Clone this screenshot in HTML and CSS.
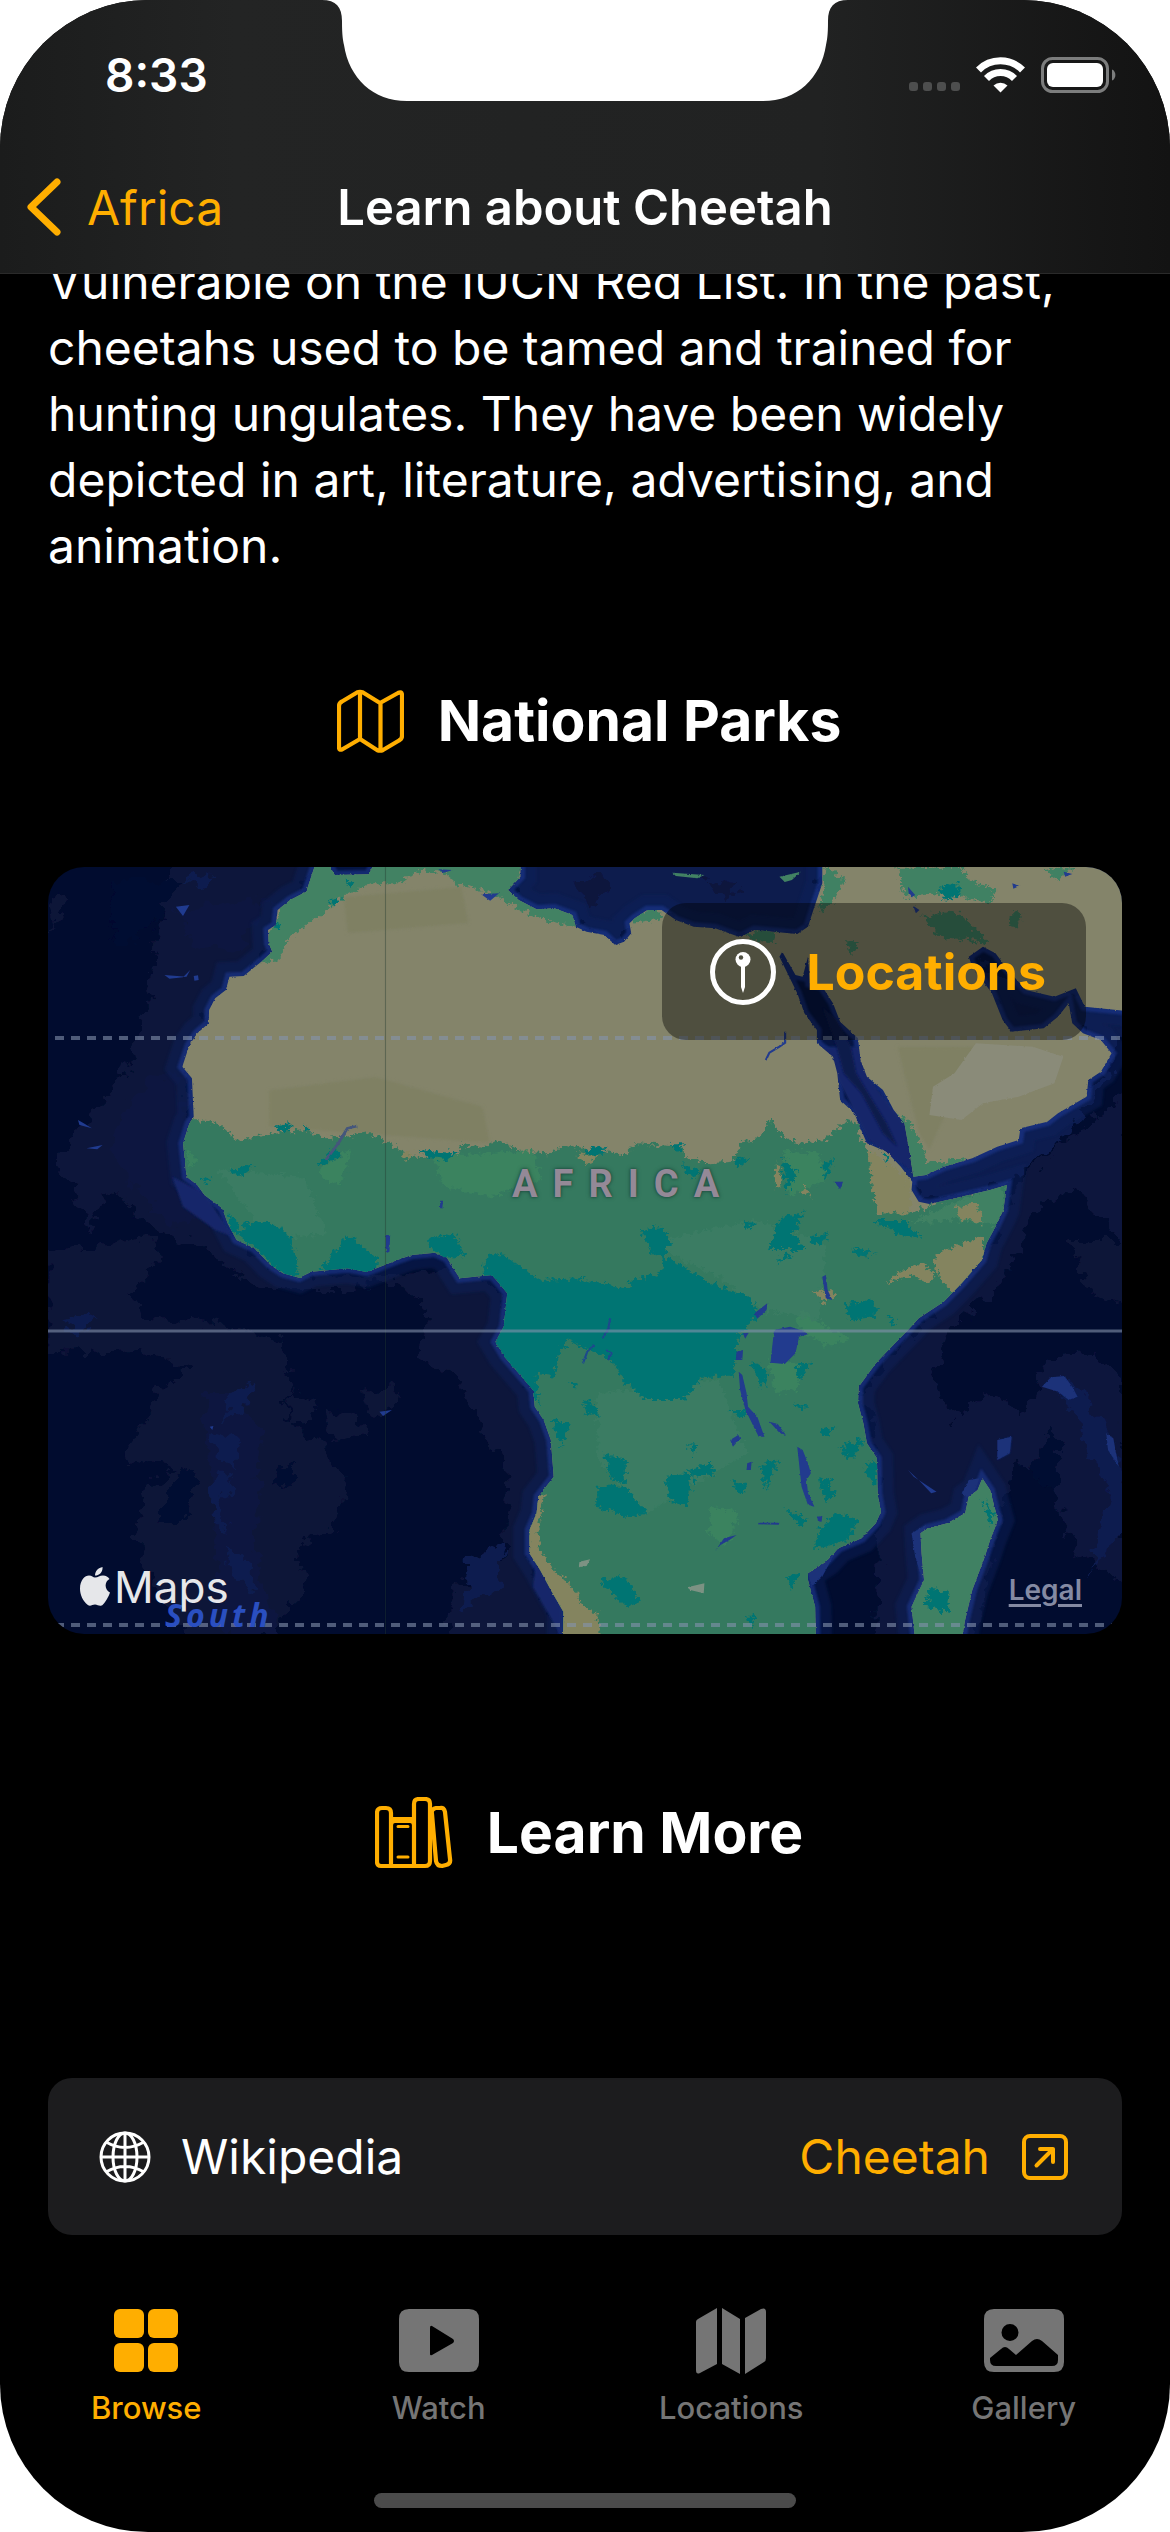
FILE: index.html
```html
<!DOCTYPE html>
<html lang="en">
<head>
<meta charset="utf-8">
<meta name="viewport" content="width=device-width, initial-scale=1">
<title>Learn about Cheetah</title>
<link rel="stylesheet" href="styles.css">
</head>
<body>
<div class="screen">
  <header class="topbar">
    <svg class="notch" viewBox="0 0 526 102" aria-hidden="true"><path fill="#fff" d="M0 0C14 0 20 7 20 21C20 36 21 40 22 45C27 78 51 101 85 101H441C475 101 499 78 504 45C505 40 506 36 506 21C506 7 512 0 526 0Z"/></svg>
    <div class="status">
      <time class="clock">8:33</time>
      <div class="indicators">
        <svg class="cell" viewBox="0 0 51 9" fill="#4d4e4e" aria-hidden="true"><rect width="9" height="9" rx="3"/><rect x="14" width="9" height="9" rx="3"/><rect x="28" width="9" height="9" rx="3"/><rect x="42" width="9" height="9" rx="3"/></svg>
        <svg class="wifi" viewBox="0 0 49 36" aria-hidden="true"><g fill="none" stroke="#fff" stroke-width="7"><path d="M2.500 13A31 31 0 0 1 46.500 13"/><path d="M10.500 21.500A19.500 19.500 0 0 1 38.500 21.500"/></g><path fill="#fff" d="M17.500 28.500A10.500 10.500 0 0 1 31.500 28.500L24.500 35.500Z"/></svg>
        <svg class="battery" viewBox="0 0 75 36" aria-hidden="true"><rect x="1.500" y="1.500" width="65" height="33" rx="10" fill="none" stroke="#7c7d7d" stroke-width="3"/><rect x="6" y="6" width="56" height="24" rx="6" fill="#fff"/><path d="M71 12.500C75.500 14 75.500 22 71 23.500Z" fill="#7c7d7d"/></svg>
      </div>
    </div>
    <nav class="navbar">
      <a class="back" href="#africa"><svg viewBox="0 0 34 58" aria-hidden="true"><path d="M30 4L4 29L30 54" fill="none" stroke="currentColor" stroke-width="7" stroke-linecap="round" stroke-linejoin="round"/></svg>Africa</a>
      <h1>Learn about Cheetah</h1>
    </nav>
  </header>

  <main>
    <p class="story">Vulnerable on the IUCN Red List. In the past,<br>cheetahs used to be tamed and trained for<br>hunting ungulates. They have been widely<br>depicted in art, literature, advertising, and<br>animation.</p>

    <h2 class="parks-title"><svg class="icon-map" viewBox="0 0 67 64" aria-hidden="true"><path d="M2 17Q2 14 5 12.500L20 3.500Q23 2 26 3.500L43 14L61 4Q65 2 65 6V47Q65 50 62 51.500L46 61Q43 62.500 40 61L23 50L5 60.500Q2 61.500 2 58.500ZM23 3V50M43.500 14V61" fill="none" stroke="currentColor" stroke-width="4.200" stroke-linejoin="round"/></svg>National Parks</h2>

    <section class="map">
      <svg class="terrain" viewBox="0 0 1074 767" preserveAspectRatio="none" aria-hidden="true">
        <defs>
          <filter id="rough" x="-5%" y="-5%" width="110%" height="110%"><feTurbulence type="fractalNoise" baseFrequency=".07" numOctaves="3" seed="4"/><feDisplacementMap in="SourceGraphic" scale="34" xChannelSelector="R" yChannelSelector="G"/></filter>
          <filter id="coast" x="-5%" y="-5%" width="110%" height="110%"><feTurbulence type="fractalNoise" baseFrequency=".12" numOctaves="2" seed="9"/><feDisplacementMap in="SourceGraphic" scale="7" xChannelSelector="R" yChannelSelector="G"/></filter>
          <filter id="seabed" x="-10%" y="-10%" width="120%" height="120%"><feTurbulence type="fractalNoise" baseFrequency=".025" numOctaves="3" seed="14"/><feDisplacementMap in="SourceGraphic" scale="70" xChannelSelector="R" yChannelSelector="G"/><feGaussianBlur stdDeviation="2"/></filter>
          <filter id="soft" x="-20%" y="-20%" width="140%" height="140%"><feGaussianBlur stdDeviation="5"/></filter>
          <filter id="shelf" x="-20%" y="-20%" width="140%" height="140%"><feGaussianBlur stdDeviation="3"/></filter>
          <path id="land" d="M768 21L745 95L700 120L665 150L660 195L638 210L640 250L650 275L625 300L570 348L530 350L520 390L490 415L473 450L472 490L440 520L418 555L398 620L425 655L430 770L418 790L400 850L410 950L440 975L460 1005L510 1045L525 1090L550 1140L600 1165L645 1215L680 1240L725 1253L760 1235L860 1225L915 1236L1000 1200L1040 1185L1105 1178L1140 1195L1160 1230L1175 1255L1265 1245L1285 1270L1308 1300L1298 1400L1275 1445L1300 1490L1340 1540L1380 1590L1385 1640L1410 1680L1430 1740L1438 1850L1395 1910L1390 1960L1370 2010L1370 2080L1400 2130L1430 2190L1465 2255L1464 2340H2172L2170 2240L2150 2160L2150 2140L2200 2105L2235 2065L2300 2035L2340 1990L2354 1955L2345 1900L2343 1795L2315 1750L2305 1690L2290 1630L2292 1580L2340 1510L2375 1470L2430 1410L2460 1375L2530 1325L2580 1270L2637 1200L2650 1150L2675 1100L2697 1050L2707 975L2660 990L2600 1005L2540 1020L2490 1032L2460 1025L2440 990L2442 965L2410 920L2370 875L2315 850L2295 800L2280 760L2240 720L2232 640L2220 590L2175 550L2175 510L2140 460L2120 400L2070 290L2078 275L2115 345L2135 350L2150 290L2155 370L2190 380L2220 430L2240 485L2290 535L2297 600L2315 650L2360 690L2390 750L2420 790L2435 880L2445 950L2480 945L2530 920L2610 895L2680 860L2740 840L2745 805L2820 785L2850 760L2930 710L2935 660L2970 635L3000 580L2970 540L2920 520L2890 490L2880 430L2850 470L2810 505L2720 515L2695 480L2665 400L2610 320L2600 290L2640 260L2675 280L2710 330L2760 390L2840 410L2900 385L2925 440L3060 455V0H2190V70L2165 150L2150 200L2120 222L2000 210L1960 232L1890 205L1830 200L1780 180L1740 150L1700 150L1665 175L1650 190L1655 220L1635 245L1610 255L1580 225L1530 215L1500 200L1490 165L1440 145L1390 148L1340 120L1310 90L1345 50V0H940L920 43L825 45L800 0Z"/>
          <path id="madagascar" d="M2638 1855L2660 1890L2672 1940L2682 1980L2660 2040L2645 2090L2610 2190L2590 2280L2580 2340H2450L2440 2240L2475 2160L2468 2080L2465 2020L2485 2005L2540 1990L2590 1960L2600 1910L2625 1890Z"/>
          <clipPath id="on-land"><use href="#land"/><use href="#madagascar"/></clipPath>
        </defs>
        <rect width="1074" height="767" fill="#010c2f"/>
        <g transform="scale(.35714 .33333) translate(-22 -21)">
          <g filter="url(#seabed)">
            <path fill="#10163a" d="M380 0H780L620 300L480 450L400 620L420 900L480 1060L640 1220L900 1260L1180 1220L1300 1300L1290 1420L1440 1720L1430 1900L1370 2100L1460 2340H1130L1160 2180L1300 2100L1310 1800L1240 1740L1180 1560L1060 1500L1080 1330L1000 1260L860 1290L620 1290L460 1160L340 1120L200 1000L140 1110L100 1000L40 900L110 800L240 640L310 400L330 200Z"/>
            <path fill="#0f1539" d="M20 1180L320 1130L330 1200L260 1300L290 1370L400 1380L520 1400L680 1440L700 1580L680 1680L800 1760L860 1860L820 2000L720 2060L740 2200L600 2340H420L340 2220L260 2020L310 1880L380 1820L240 1800L320 1600L420 1520L280 1470L20 1480ZM20 100L80 120L30 210ZM700 1600L770 1620L760 1680L690 1690ZM800 1640L880 1660L920 1730L810 1740ZM910 1590L1000 1580L980 1660L920 1650Z"/>
            <path fill="#0d1741" d="M380 620L420 900L480 1060L360 1100L200 900L240 720ZM380 150L640 120L560 260L440 270ZM460 1600L560 1600L620 1740L600 2060L660 2330H520L480 1900Z"/>
            <path fill="#0e163d" d="M2340 2340L2350 2000L2340 1700L2300 1600L2460 1400L2680 1140L2740 960L3040 700V1160L2900 980L2780 1060L2700 1260L2560 1400L2500 1560L2560 1680L2640 1600L2760 1660L2820 1490L2950 1480L3040 1560V2180L2900 2080L2840 1900L2740 1800L2690 1960L2620 2340Z"/>
            <path fill="#0f1538" d="M2890 1140H3040V1330L2940 1300Z"/>
            <path fill="#0e1c50" d="M2460 1030L2700 970L2860 850L3010 620V440L2900 420L2970 640L2680 840L2440 940ZM2830 1550L2900 1560L2960 1660L3040 1860V2020L2960 2090L2930 2160L3000 1900L2900 1680Z"/>
            <path fill="#101e50" d="M600 1560L570 1660L500 1680L540 1600ZM480 1720L560 1740L550 1820L500 1800ZM470 1860L540 1840L500 1960L530 2010L490 1990ZM530 2060L590 2120L600 2200L520 2130ZM60 1380L150 1370L120 1420ZM400 60L480 40L460 90ZM1200 2100L1300 2060L1280 2180L1180 2260Z"/>
            <path fill="#020e31" d="M400 60H200V240H280ZM400 1820L440 1850L420 1960L330 1990L340 1950ZM660 1830L730 1810L670 1890ZM2820 1700L2860 1760L2840 1900L2780 1860Z"/>
            <path fill="#0d1b4d" d="M1330 0H2200L2140 230H1880L1740 150L1600 240L1340 120ZM2600 300L2740 360L2920 410L3040 440V530L2900 500L2720 530Z"/>
            <path fill="#0e143c" d="M1500 60L1560 30L1600 100L1540 130ZM1860 60L1960 70L1920 130Z"/>
          </g>
          <g fill="none" stroke="#11235c" stroke-width="90" filter="url(#soft)" opacity=".45"><use href="#land"/><use href="#madagascar"/></g>
          <g fill="none" stroke="#1f3990" stroke-width="26" filter="url(#shelf)" opacity=".6"><use href="#land"/><use href="#madagascar"/></g>
          <path fill="#14276b" filter="url(#shelf)" d="M2190 560L2290 560L2330 670L2440 820L2450 940L2320 840ZM370 950L460 1000L540 1130L490 1110L400 1040ZM2690 1740L2720 1730L2715 1780L2680 1800ZM1390 2100L1460 2240V2330L1380 2180Z"/>
          <path fill="#1a3079" filter="url(#coast)" d="M2805 1580L2830 1552L2868 1548L2890 1580L2905 1610L2880 1620L2850 1595ZM2680 1740L2720 1730L2715 1780L2680 1800ZM2985 1720L3005 1735L3020 1820L2990 1770ZM2480 1995L2440 2020L2450 2090L2470 2160L2440 2230L2475 2230L2490 2140L2480 2060ZM2600 1860L2630 1855L2610 1920L2580 1900ZM2150 2140L2200 2100L2230 2070L2190 2150L2160 2180Z"/>
          <path fill="#0d1a4b" filter="url(#shelf)" d="M2190 440L2230 480L2270 560L2285 640L2330 720L2370 790L2400 860L2360 820L2300 700L2250 640L2230 560Z"/>
          <g fill="#203b8f"><path d="M380 140L418 135L400 168ZM348 345L410 350L420 330L400 352L362 356ZM430 348L442 346L444 360L432 362ZM106 780L122 790L145 805L110 795ZM130 865L175 855L160 868ZM950 1655L985 1650L960 1668ZM475 1700L485 1698L482 1710ZM2430 1830L2446 1850L2510 1895L2495 1900L2460 1860Z"/></g>

          <g filter="url(#coast)">
            <g clip-path="url(#on-land)">
              <rect x="0" y="0" width="3060" height="2340" fill="#84846a"/>
              <g filter="url(#soft)" fill="#7f8064"><path d="M850 110L1180 80L1200 190L860 220ZM640 690L940 650L1240 740L1260 850L640 800ZM2400 560L2620 560L2490 870L2460 820Z"/></g>
              <path fill="#8a8b79" d="M2620 550L2780 560L2865 590L2840 670L2740 710L2640 730L2580 780L2490 765L2500 680L2560 640Z"/>
              <g filter="url(#rough)">
                <path fill="#428264" d="M740 0H1360L1330 90L1500 150V200L1420 185L1330 140L1240 90L1170 75L1130 40L1060 30L1010 70L930 70L860 100L780 170L690 240L670 300L600 310Z"/>
                <path fill="#34795f" d="M380 775L470 780L510 800L550 840L650 820L740 810L800 835L920 820L980 850L1040 890L1170 890L1180 850L1240 865L1280 840L1350 875L1420 880L1480 855L1640 885L1670 850L1790 860L1810 890L1870 910L1940 905L1960 850L2020 830L2045 780L2080 830L2120 850L2200 840L2260 780L2290 790L2300 850L2320 870L2330 960L2345 1060L2440 1060L2500 1030L2720 960V1400L2300 2340H1380V2100L1200 1400L300 1200Z"/>
                <path fill="#3f8163" d="M2440 1850H2720V2340H2420ZM2200 20L2250 60L2220 130L2180 160ZM2400 20L2580 20L2600 60L2680 90L2660 130L2540 100L2420 110ZM2470 170L2560 150L2660 250L2600 240L2520 230ZM1650 170L1720 145L1750 170L1670 190ZM1980 225L2030 200L2060 220L2050 250L1990 240ZM2430 780L2470 850L2480 910L2600 890L2550 925L2440 960L2400 760ZM2810 30L2850 60L2890 30L2860 20ZM2260 240L2290 250L2280 285L2260 270ZM2720 160L2750 160L2730 210L2715 190ZM2430 1090L2700 960L2690 1100L2560 1080Z"/>
                <path fill="#3a835f" d="M1100 890L1380 870L1400 960L1260 1010L1130 980ZM780 930L870 870L840 970L800 965ZM400 860L440 900L420 920ZM2080 870L2180 880L2200 960L2100 1010ZM2040 1500L2130 1510L2120 1590L2060 1600ZM1880 1940L1960 1960L1920 2060L1870 2020ZM2130 1350L2200 1400L2270 1440L2200 1460L2120 1400Z"/>
                <path fill="#3d7d65" opacity=".7" d="M1900 1250L1700 1150L2000 1080L2200 1150L2180 1380L2020 1350ZM1560 1600L1900 1560L1980 1780L1700 1960L1560 1800ZM500 930L740 950L800 1120L640 1140Z"/>
              </g>
              <g filter="url(#rough)" fill="#007573">
                <path d="M1280 1270L1290 1180L1320 1200L1400 1260L1510 1255L1640 1285L1660 1260L1740 1240L1750 1190L1800 1220L1860 1260L1930 1290L1990 1310L2010 1370L1960 1420L1940 1550L1860 1550L1800 1620L1700 1620L1640 1570L1600 1500L1480 1440L1450 1480L1440 1550L1390 1540L1400 1640L1330 1540L1240 1450Z"/>
                <path d="M570 1085L650 1090L700 1130L720 1200L720 1250L680 1245L600 1160L560 1130ZM820 1180L860 1125L920 1170L950 1210L930 1240L780 1230ZM1080 1140L1160 1120L1190 1190L1130 1200ZM1250 1180L1310 1190L1290 1270L1240 1250ZM525 1060L550 1080L560 1130L530 1110ZM530 930L600 915L560 950ZM650 800L710 790L690 820ZM780 910L830 860L840 885L790 920ZM735 790L760 815L740 810ZM1060 870L1170 880L1140 900L1090 895ZM450 950L480 960L460 975Z"/>
                <path d="M1680 1110L1740 1100L1770 1150L1720 1190ZM1750 1130L1760 1110L1750 1200L1720 1180ZM1560 1880L1640 1880L1700 1960L1640 1970L1560 1940ZM1750 1850L1830 1840L1810 1940L1770 1930ZM1580 1780L1640 1800L1640 1870L1600 1860ZM1430 1680L1480 1690L1460 1760ZM2230 1960L2290 1980L2260 2040L2170 2070L2180 2010ZM2310 1810L2340 1800L2345 1880L2320 1860ZM2240 1760L2290 1770L2260 1800ZM2180 1870L2230 1900L2200 1930ZM1990 1500L2040 1530L2020 1590ZM2080 1940L2150 1980L2130 2000ZM1560 2160L1640 2150L1680 2230L1640 2240L1600 2200ZM2490 2180L2550 2200L2540 2260L2480 2240ZM2640 1920L2670 1960L2660 2000ZM2330 1080L2420 1080L2470 1140L2400 1120ZM2080 900L2120 930L2090 1000ZM2190 910L2220 900L2200 960ZM2080 1070L2140 1060L2110 1120L2140 1170L2040 1170L2060 1110ZM2150 1130L2210 1120L2180 1160ZM2270 1160L2340 1180L2300 1190ZM2250 1330L2340 1320L2340 1370L2270 1380ZM2520 80L2570 70L2580 110L2530 120ZM810 120L840 115L820 140ZM650 190L675 195L665 215ZM850 55L880 65L870 85ZM2360 880L2380 890L2370 910ZM1520 870L1590 860L1560 890ZM1760 850L1800 850L1790 880ZM1790 910L1850 930L1830 960Z"/>
                <path d="M2180 1710L2230 1700L2200 1730ZM2020 1820L2070 1790L2050 1850L2030 1890ZM1810 1760L1840 1750L1830 1790ZM1810 1830L1880 1810L1890 1840L1840 1850ZM1940 1860L1980 1870L1970 1900L1950 1900ZM1520 1620L1550 1630L1570 1670L1530 1660ZM1480 1560L1510 1570L1500 1590ZM2160 1500L2130 1560L2110 1520ZM2110 1630L2150 1640L2120 1650ZM2250 1750L2310 1740L2280 1790ZM2180 1850L2220 1860L2190 1890ZM1930 1650L1980 1650L1960 1680ZM1970 1080L2000 1090L1980 1110ZM1940 900L1990 890L1960 920ZM2080 1180L2110 1190L2060 1210ZM2370 1370L2400 1380L2380 1400ZM2090 2150L2130 2140L2100 2190ZM1980 2270L2010 2270L1990 2300Z"/>
              </g>
              <g filter="url(#rough)" fill="#84845f">
                <path d="M2500 1190L2530 1170L2640 1130V1220L2560 1300L2520 1260ZM2370 1270L2400 1240L2470 1210L2510 1250L2480 1270L2440 1245ZM2160 1290L2230 1295L2200 1330ZM2320 870L2360 900L2430 950L2440 1060L2350 1060L2325 960ZM2060 900L2080 960L2060 990ZM2140 975L2160 1010L2130 1000ZM2560 1040L2620 1030L2640 1090L2580 1080Z"/>
                <path d="M1385 1890L1410 1910L1395 2000L1400 2070L1440 2130L1500 2190L1510 2230L1560 2260L1565 2340H1460L1360 2100ZM1500 880L1560 890L1530 915ZM1010 880L1040 870L1030 900Z"/>
              </g>
              <g fill="#7c9283"><path d="M1510 2105L1540 2098L1530 2118L1508 2122ZM1812 2182L1860 2170L1858 2200L1820 2190Z"/></g>
            </g>
            <g fill="#203a8e">
              <path d="M2055 1410L2100 1400L2128 1410L2152 1422L2125 1430L2115 1480L2085 1512L2045 1508ZM1956 1535L1966 1545L1978 1600L1982 1640L2008 1670L2028 1730L2012 1730L1975 1650L1960 1590ZM2120 1760L2135 1770L2150 1810L2158 1840L2146 1860L2150 1900L2168 1940L2150 1935L2132 1880ZM2000 1360L2036 1330L2034 1350L2008 1376ZM2190 1250L2200 1245L2205 1290L2218 1320L2200 1315ZM1932 1740L1955 1725L1960 1735L1940 1760ZM2042 1685L2065 1692L2088 1725L2070 1718ZM1950 1475L1968 1470L1966 1500L1948 1500ZM1968 1420L1984 1418L1974 1436ZM1890 2072L1915 2035L1950 2025L1930 2040L1905 2055ZM2176 1970L2190 1968L2188 1985L2178 1984ZM2012 1988L2070 1988L2068 1994L2010 1993ZM1980 1810L1992 1805L1990 1830L1978 1830ZM2224 965L2248 965L2240 988ZM968 1125L980 1125L978 1175L968 1180ZM1120 1022L1128 1022L1126 1045L1120 1045ZM1235 103L1285 100L1260 122ZM2430 80L2450 105L2440 112L2432 100ZM2445 138L2462 150L2452 160ZM2722 70L2742 78L2725 86ZM2866 35L2890 42L2870 50ZM1115 28L1155 30L1130 38Z"/>
              <path d="M2086 515V548L2070 560L2042 578L2032 600" fill="none" stroke="#203a8e" stroke-width="6"/>
              <path d="M1596 1375L1590 1410L1575 1435M1552 1455L1532 1475L1520 1510M1585 1470L1600 1480L1590 1500" fill="none" stroke="#1e4a8c" stroke-width="6"/>
              <path d="M888 798L860 805L835 850L800 900" fill="none" stroke="#44577b" stroke-width="8"/>
            </g>
            <path fill="#428264" d="M1770 38L1860 45L1840 55L1780 48ZM2070 50L2130 35L2105 60L2085 66Z"/>
          </g>
          <path d="M967 21V2322" stroke="#223a30" stroke-opacity=".4" stroke-width="3"/>
        </g>
        <g stroke="#8492ad" stroke-opacity=".6" fill="none" stroke-width="4"><path d="M7 171H1074" stroke-dasharray="9 7"/><path d="M7 758H1074" stroke-dasharray="9 7"/><path d="M0 464H1074" stroke-width="3"/></g>
      </svg>
      <span class="continent">AFRICA</span>
      <span class="ocean">South</span>
      <span class="brand"><svg viewBox="0 0 30 40" aria-hidden="true"><path fill="currentColor" d="M15 10.500C18 10.500 19.500 8.500 23 8.500C26 8.500 28 10 29.500 12C24 15 24.500 23 30 25.500C28.500 30 25.500 35 23 37.500C20 40.500 18 37.500 15 37.500C12 37.500 10.500 40 7.500 37.800C3 34 0 28 0 21.500C0 13 5 8.500 9 8.500C12 8.500 13 10.500 15 10.500ZM15 8.500C15 4 18.500 .8 22.500 0C23 5 19.500 8.500 15 8.500Z"/></svg>Maps</span>
      <a class="legal" href="#legal">Legal</a>
      <a class="locations" href="#locations"><svg viewBox="0 0 66 66" aria-hidden="true"><circle cx="33" cy="33" r="30.500" fill="none" stroke="#fff" stroke-width="5"/><path fill="#fff" d="M31 25H35V48L33 54L31 48Z"/><circle cx="33" cy="20.500" r="7.500" fill="#fff"/><circle cx="31" cy="18.500" r="2.200" fill="#4f4f40"/></svg>Locations</a>
    </section>

    <h2 class="more-title"><svg class="icon-books" viewBox="0 0 78 72" aria-hidden="true"><g fill="none" stroke="currentColor" stroke-width="4.200" stroke-linejoin="round"><path d="M2 65V16Q2 11 7 11H11Q16 11 16 16V69H6Q2 69 2 65ZM39 69V7Q39 2 44 2H50Q55 2 55 7V64Q55 69 50 69H16M16 22H39M16 28Q16 24 20 24H35Q39 24 39 28"/><path d="M57 17Q56 12 61 11L65 11Q69 10 70 15L75 62Q76 67 71 68L67 69Q62 69 61 64Z"/><path d="M23 29.500H33M23 60H33" stroke-width="3" stroke-linecap="round"/></g></svg>Learn More</h2>

    <div class="link-row">
      <svg class="icon-globe" viewBox="0 0 52 52" fill="none" stroke="#fff" stroke-width="3" aria-hidden="true"><circle cx="26" cy="26" r="24"/><ellipse cx="26" cy="26" rx="12" ry="24"/><path d="M26 2V50M2 26H50M7 11Q26 22 45 11M7 41Q26 30 45 41"/></svg>
      <span>Wikipedia</span>
      <a class="outlink" href="#cheetah">Cheetah<svg viewBox="0 0 46 46" fill="none" stroke="currentColor" aria-hidden="true"><rect x="2" y="2" width="42" height="42" rx="6" stroke-width="4"/><path d="M14.500 31.500L31 15M18 15H31V28" stroke-width="4" stroke-linecap="round" stroke-linejoin="round"/></svg></a>
    </div>
  </main>

  <nav class="tabs">
    <a class="tab active" href="#browse"><svg viewBox="0 0 80 66" fill="currentColor" aria-hidden="true"><rect x="8" y="1" width="30" height="29" rx="6"/><rect x="42" y="1" width="30" height="29" rx="6"/><rect x="8" y="35" width="30" height="29" rx="6"/><rect x="42" y="35" width="30" height="29" rx="6"/></svg>Browse</a>
    <a class="tab" href="#watch"><svg viewBox="0 0 80 66" aria-hidden="true"><path fill="currentColor" fill-rule="evenodd" d="M10 1H70Q80 1 80 11V54Q80 64 70 64H10Q0 64 0 54V11Q0 1 10 1ZM31 20V46Q31 48 33 47L54 35Q56 33 54 31L33 18Q31 17 31 20Z"/></svg>Watch</a>
    <a class="tab" href="#map"><svg viewBox="0 0 80 66" fill="currentColor" aria-hidden="true"><path d="M5 14Q5 12 7 11L26 0V56L9 65Q5 67 5 62ZM31 0L49 11V66L31 56ZM54 10L70 1Q75 -1 75 4V50Q75 53 73 54L54 66Z"/></svg>Locations</a>
    <a class="tab" href="#gallery"><svg viewBox="0 0 80 66" aria-hidden="true"><path fill="currentColor" fill-rule="evenodd" d="M10 1H70Q80 1 80 11V54Q80 64 70 64H10Q0 64 0 54V11Q0 1 10 1ZM26 16A8.500 8.500 0 1 0 26 33A8.500 8.500 0 1 0 26 16ZM6 50V52Q6 58 12 58H68Q74 58 74 52V47L58 33Q53 29 48 33L32 47L25 41Q21 37 17 41Z"/></svg>Gallery</a>
  </nav>
  <div class="home"></div>
</div>
</body>
</html>
```
FILE: styles.css
```css
* { box-sizing: border-box; }

body {
  margin: 0;
  background: #fff;
  color: #fff;
  font-family: Inter, "Liberation Sans", sans-serif;
}

a { color: #ffae00; text-decoration: none; }
svg { display: block; flex: none; }
h1, h2, p { margin: 0; }

.screen {
  display: flex;
  flex-direction: column;
  min-height: 100vh;
  overflow: hidden;
  background: #000;
  border-radius: 148px;
}

.topbar {
  position: relative;
  z-index: 1;
  background: linear-gradient(90deg, #1b1c1c, #232424 20%, #212222 70%, #131313);
  border-bottom: 1px solid #2a2a2a;
}

.notch {
  position: absolute;
  top: 0;
  left: 50%;
  width: 526px;
  transform: translateX(-50%);
}

.status {
  display: flex;
  justify-content: space-between;
  align-items: center;
  height: 141px;
  padding: 8px 54px 0 105px;
}

.clock { font-size: 46px; font-weight: 600; }
.indicators { display: flex; align-items: center; gap: 16px; }
.cell { width: 51px; align-self: flex-end; margin-bottom: 2px; }
.wifi { width: 49px; }
.battery { width: 75px; }

.navbar {
  display: grid;
  grid-template-columns: 1fr auto 1fr;
  align-items: center;
  height: 132px;
  padding: 0 27px;
}

.back { display: flex; align-items: center; gap: 26px; font-size: 48px; }
.back svg { width: 34px; }
.navbar h1 { font-size: 49px; font-weight: 600; }

main { flex: 1; padding: 0 48px; }

.story {
  margin-top: -25px;
  font-size: 48px;
  line-height: 66px;
}

h2 {
  display: flex;
  justify-content: center;
  align-items: center;
  gap: 34px;
  font-size: 57px;
  line-height: 72px;
}

.parks-title { padding: 106px 0 110px 8px; }
.icon-map { width: 67px; color: #ffae00; }

.map {
  position: relative;
  overflow: hidden;
  border-radius: 36px;
}

.terrain { width: 100%; height: 767px; }

.continent, .ocean, .brand, .legal, .locations { position: absolute; }

.continent {
  top: 292px;
  left: 464px;
  color: #948997;
  font: 700 38px/50px Roboto, sans-serif;
  letter-spacing: 15px;
  text-shadow: 0 0 4px #1d4b3e, 0 0 2px #1d4b3e;
}

.ocean {
  bottom: 2px;
  left: 117px;
  color: #2a4fc0;
  font: italic 700 32px/34px "Open Sans", sans-serif;
  letter-spacing: 4px;
}

.brand {
  left: 32px;
  bottom: 22px;
  display: flex;
  align-items: center;
  gap: 4px;
  color: #e6e7ea;
  font-size: 44px;
  line-height: 50px;
}

.brand svg { width: 30px; }

.legal {
  right: 40px;
  bottom: 27px;
  color: #848aa3;
  font-size: 28px;
  font-weight: 600;
  line-height: 34px;
  text-decoration: underline;
  text-decoration-thickness: 3px;
  text-underline-offset: 4px;
}

.locations {
  top: 36px;
  right: 36px;
  display: flex;
  align-items: center;
  gap: 30px;
  height: 137px;
  padding: 0 40px 0 48px;
  border-radius: 24px;
  background: rgba(0, 0, 0, .4);
  font-size: 50px;
  font-weight: 700;
}

.locations svg { width: 66px; }

.more-title { padding: 163px 0 209px 8px; }
.icon-books { width: 78px; color: #ffae00; }

.link-row {
  display: flex;
  align-items: center;
  gap: 30px;
  min-height: 157px;
  padding: 0 54px 0 51px;
  border-radius: 24px;
  background: #1c1c1e;
  font-size: 48px;
}

.icon-globe { width: 52px; }

.outlink {
  display: flex;
  align-items: center;
  gap: 32px;
  margin-left: auto;
}

.outlink svg { width: 46px; }

.tabs {
  display: grid;
  grid-template-columns: repeat(4, 1fr);
  padding-bottom: 67px;
}

.tab {
  display: flex;
  flex-direction: column;
  align-items: center;
  gap: 16px;
  color: #757575;
  font-size: 31px;
  font-weight: 500;
  line-height: 36px;
}

.tab svg { width: 80px; }
.tab.active { color: #ffae00; }

.home {
  width: 36%;
  height: 15px;
  margin: 0 auto 24px;
  border-radius: 8px;
  background: #4b4b4b;
}
```
